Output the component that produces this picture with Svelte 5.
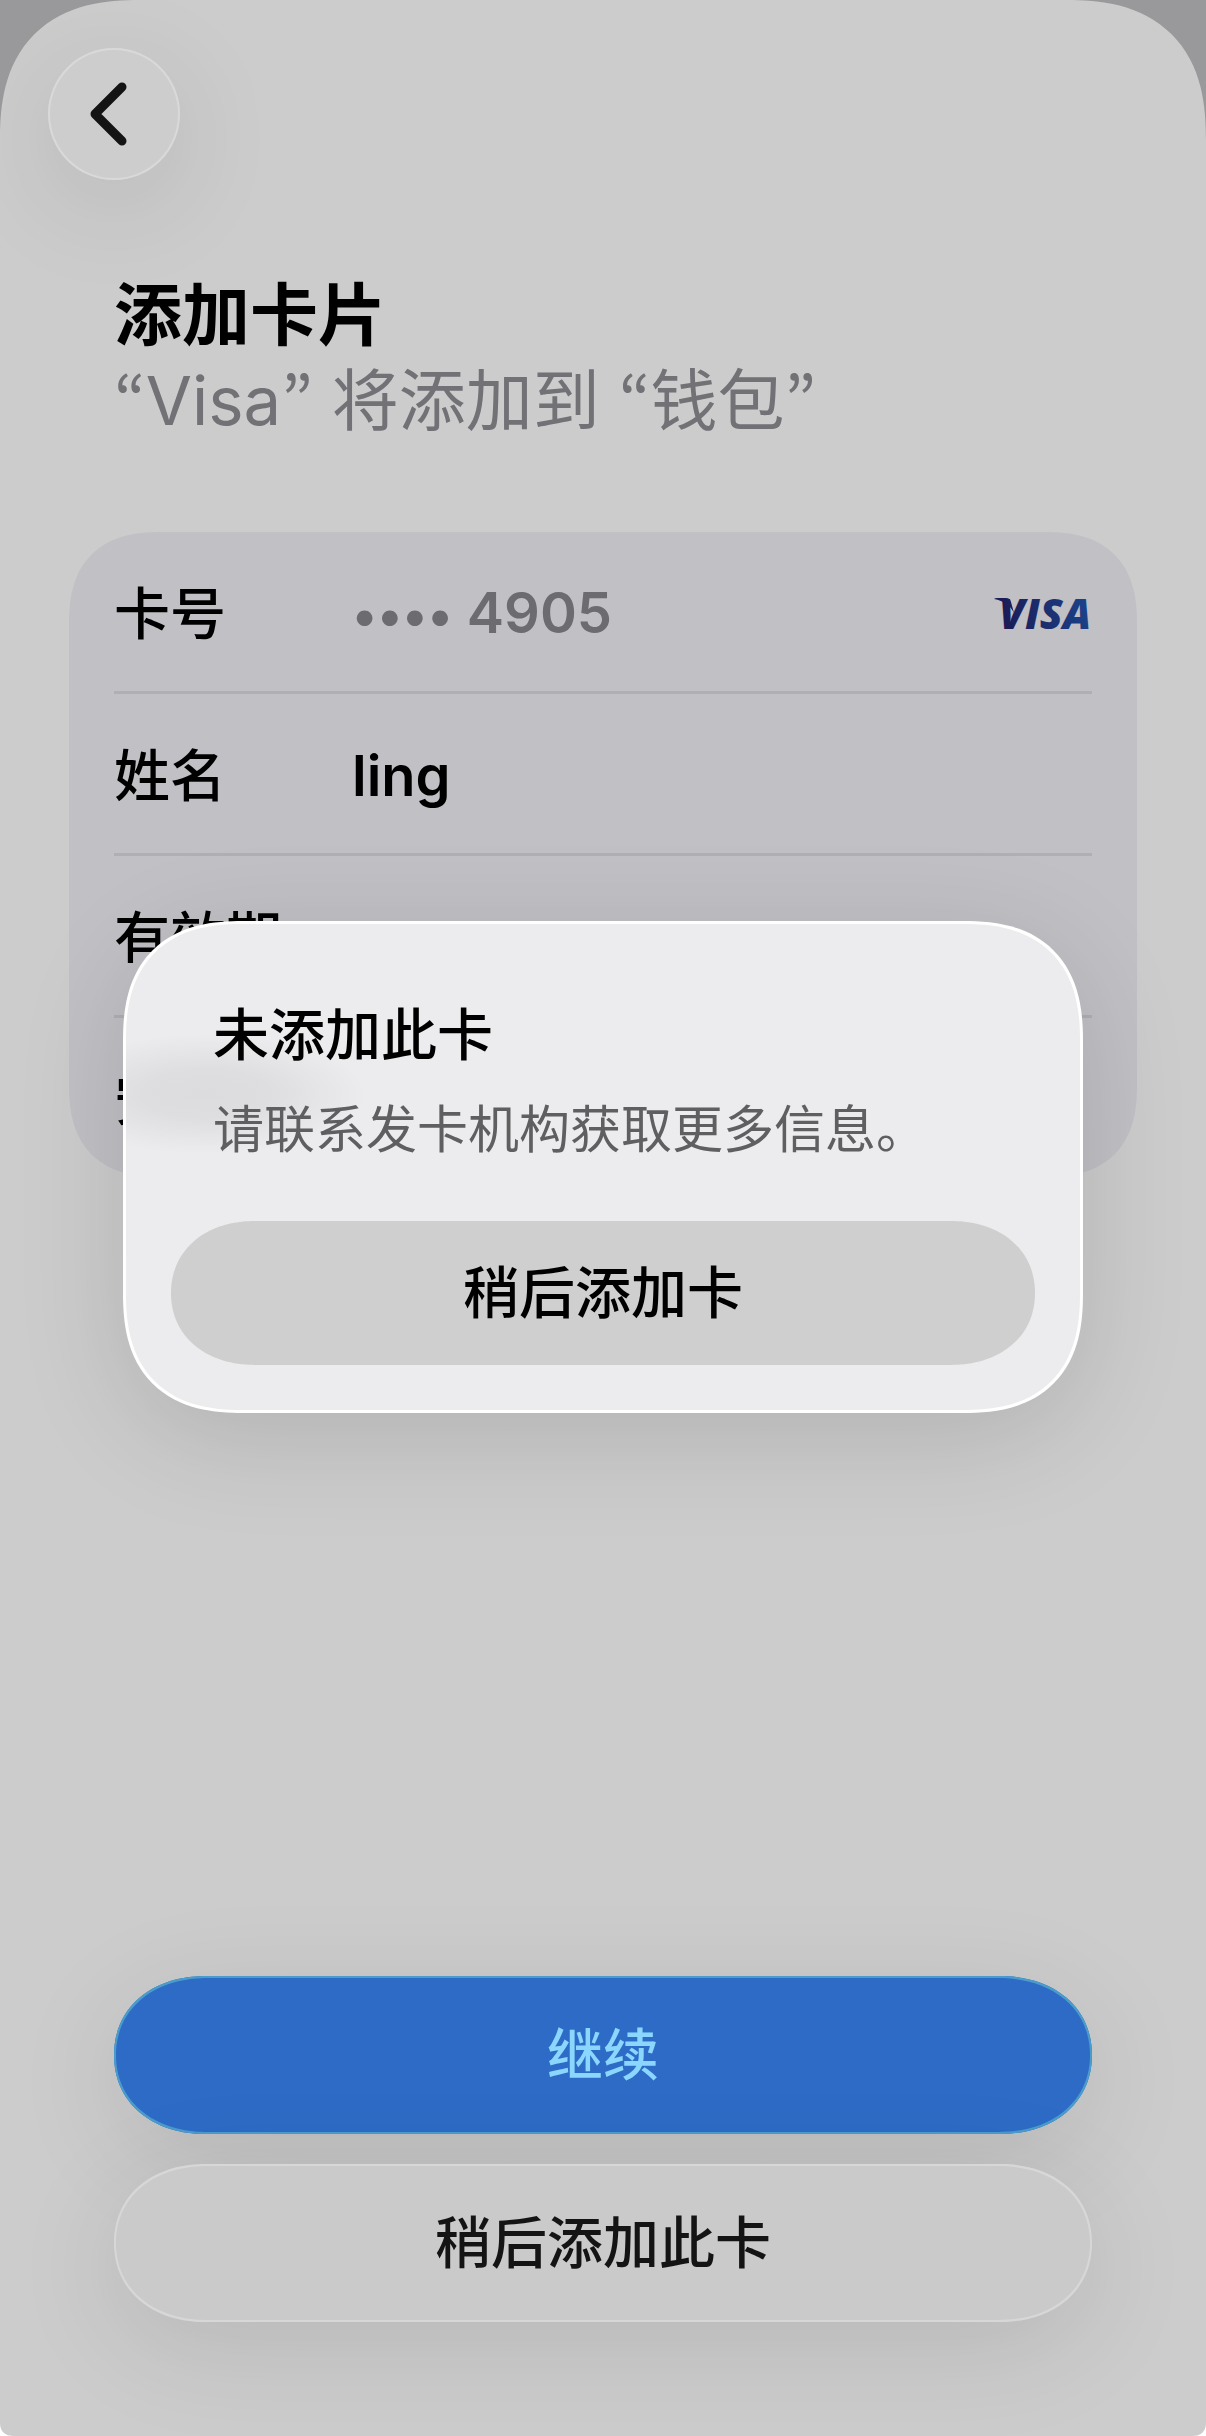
<script lang="ts">
	interface Field {
		id: string;
		label: string;
		value: string;
	}

	let fields: Field[] = $state([
		{ id: 'holder', label: '姓名', value: 'ling' },
		{ id: 'expiry', label: '有效期', value: '' },
		{ id: 'code', label: '安全码', value: '' }
	]);

	const lastDigits = '4905';
	let showAlert = $state(true);
</script>

<div class="sheet">
	<header class="top-bar">
		<button class="back" aria-label="返回">
			<svg viewBox="0 0 132 132" aria-hidden="true">
				<path d="M74 39 L47 66 L74 93" />
			</svg>
		</button>
	</header>

	<main>
		<div class="heading">
			<h1>添加卡片</h1>
			<p>
				<span class="quote">“</span>Visa<span class="quote">”</span> 将添加到
				<span class="quote">“</span>钱包<span class="quote">”</span>
			</p>
		</div>

		<form class="card-form">
			<div class="row">
				<span class="label">卡号</span>
				<span class="number"><span class="dots">••••</span> {lastDigits}</span>
				<svg class="visa" viewBox="0 -13 98 60" role="img" aria-label="Visa">
					<defs>
						<linearGradient id="visa-blue" gradientUnits="userSpaceOnUse" x1="0" y1="30" x2="98" y2="4">
							<stop offset="0" stop-color="#1b1650" />
							<stop offset="1" stop-color="#1b458c" />
						</linearGradient>
					</defs>
					<path d="M0 2 C1 1 2 1 4 1 H12 C15 1 16 2 17 5 L20 16 C16 8 10 4 0 2 Z" fill="url(#visa-blue)" />
					<text x="5" y="32" fill="url(#visa-blue)">VISA</text>
				</svg>
			</div>
			{#each fields as field (field.id)}
				<div class="row">
					<label class="label" for={field.id}>{field.label}</label>
					<input id={field.id} type="text" autocomplete="off" bind:value={field.value} />
				</div>
			{/each}
		</form>
	</main>

	<footer class="actions">
		<button class="pill primary">继续</button>
		<button class="pill secondary">稍后添加此卡</button>
	</footer>

	{#if showAlert}
		<div class="overlay">
			<div class="alert" role="alertdialog" aria-labelledby="alert-title" aria-describedby="alert-text">
				<div class="alert-body">
					<h2 id="alert-title">未添加此卡</h2>
					<p id="alert-text">请联系发卡机构获取更多信息。</p>
				</div>
				<button class="pill alert-button" onclick={() => (showAlert = false)}>稍后添加卡</button>
			</div>
		</div>
	{/if}
</div>

<style>
	:global(body) {
		margin: 0;
		background: linear-gradient(#99999b 50%, #fff 50%);
	}

	.sheet {
		position: relative;
		display: flex;
		flex-direction: column;
		box-sizing: border-box;
		min-height: 100vh;
		background: #ccc;
		border-radius: 140px 140px 14px 14px;
		corner-shape: superellipse(1.3);
		overflow: hidden;
		font-family: Inter, 'Noto Sans CJK SC', sans-serif;
		font-size: 56px;
		line-height: 80px;
		color: #000;
	}

	button,
	input {
		font: inherit;
		color: inherit;
		border: none;
		padding: 0;
		margin: 0;
	}

	button {
		cursor: pointer;
	}

	h1,
	h2,
	p {
		margin: 0;
	}

	.top-bar {
		display: flex;
		padding: 48px;
	}

	.back {
		width: 132px;
		height: 132px;
		border-radius: 50%;
		background: #cdcdcd;
		box-shadow:
			inset 0 0 0 2px #d9d9d9,
			0 24px 110px rgba(0, 0, 0, 0.1);
	}

	.back svg {
		display: block;
		width: 132px;
		height: 132px;
		fill: none;
		stroke: #141414;
		stroke-width: 9;
		stroke-linecap: round;
		stroke-linejoin: round;
	}

	.heading {
		padding: 44px 114px 0;
		line-height: 86px;
	}

	h1 {
		font-size: 68px;
		font-weight: 700;
	}

	.heading p {
		font-size: 67px;
		color: #727176;
	}

	.quote {
		font-family: 'Noto Sans CJK KR', sans-serif;
		line-height: 1;
	}

	.card-form {
		margin: 88px 69px 0;
		padding: 0 45px;
		background: #c1c0c5;
		border-radius: 92px;
		corner-shape: superellipse(1.3);
	}

	.row {
		display: flex;
		align-items: center;
		box-sizing: border-box;
		height: 162px;
		padding-top: 4px;
		font-weight: 500;
	}

	.row:first-child {
		height: 159px;
	}

	.row + .row {
		border-top: 3px solid #b0afb4;
	}

	.label {
		width: 238px;
		flex: none;
	}

	.number {
		flex: 1;
		color: #6c6b70;
		font-weight: 600;
	}

	.dots {
		font-size: 50px;
	}

	.row input {
		flex: 1;
		min-width: 0;
		background: none;
		outline: none;
		font-weight: 600;
	}

	.visa {
		width: 98px;
		height: 60px;
		overflow: visible;
	}

	.visa text {
		font-family: 'Open Sans', sans-serif;
		font-size: 42px;
		font-style: italic;
		font-weight: 800;
	}

	.actions {
		display: flex;
		flex-direction: column;
		gap: 30px;
		margin-top: auto;
		padding: 30px 114px 114px;
	}

	.pill {
		height: 158px;
		border-radius: 92px / 79px;
		corner-shape: superellipse(1.1);
		font-weight: 500;
	}

	.primary {
		background: #2d6bc6;
		color: #8ad6fc;
		box-shadow:
			inset 0 0 0 2px #4a9ccb,
			0 24px 110px rgba(0, 0, 0, 0.1);
	}

	.secondary {
		background: #cacaca;
		color: #141414;
		box-shadow:
			inset 0 0 0 2px #d7d7d7,
			0 24px 110px rgba(0, 0, 0, 0.1);
	}

	.overlay {
		position: absolute;
		inset: 0;
		display: grid;
		place-items: center;
		padding: 0 123px 102px;
	}

	.alert {
		display: flex;
		flex-direction: column;
		box-sizing: border-box;
		width: 100%;
		max-width: 960px;
		padding: 45px;
		border: 3px solid #fff;
		border-radius: 120px;
		corner-shape: superellipse(1.3);
		background:
			radial-gradient(160px 60px at 80px 170px, #dcdcde, #dedee0 40%, rgba(236, 236, 238, 0)) padding-box,
			#ececee;
		box-shadow: 0 24px 110px rgba(0, 0, 0, 0.13);
	}

	.alert-body {
		padding: 26px 42px 51px;
	}

	h2 {
		margin-bottom: 15px;
		font-size: 56px;
		font-weight: 500;
	}

	.alert-body p {
		font-size: 51px;
		color: #5f5f61;
	}

	.alert-button {
		height: 144px;
		border-radius: 84px / 72px;
		background: #cfcfcf;
	}
</style>
